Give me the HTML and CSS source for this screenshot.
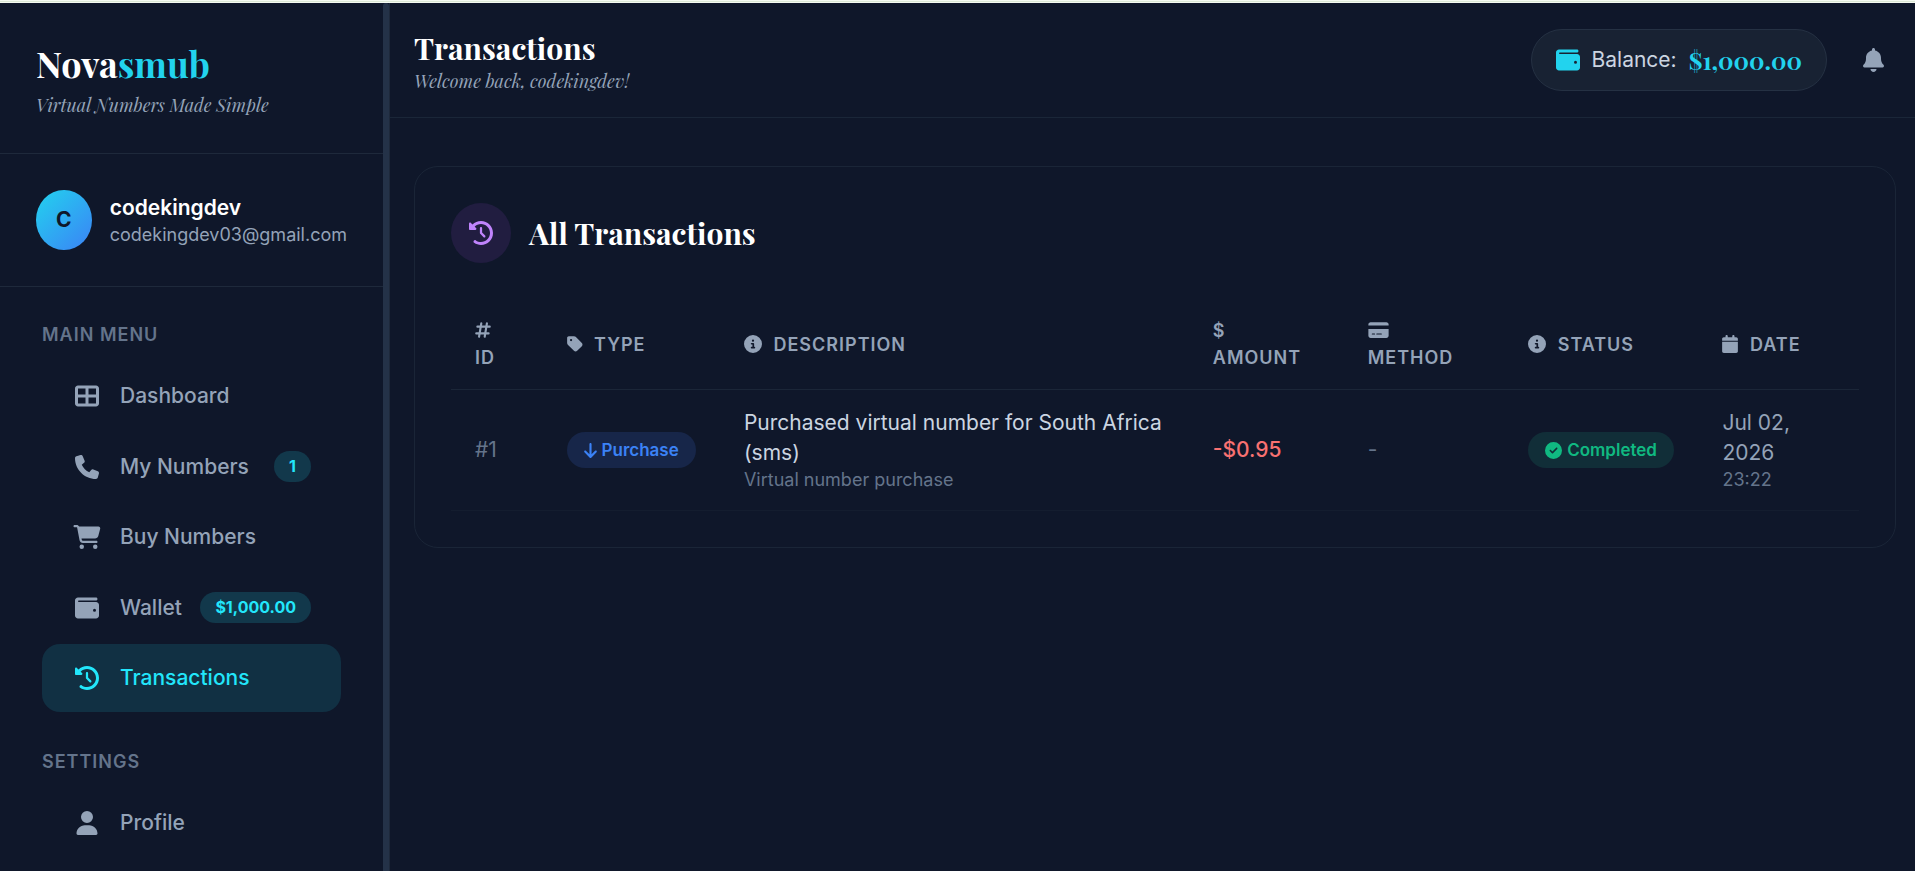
FILE: index.html
```html
<!DOCTYPE html>
<html lang="en">
<head>
    <meta charset="UTF-8">
    <meta name="viewport" content="width=device-width, initial-scale=1.0">
    <title>Transactions - Novasmub</title>
    <link rel="stylesheet" href="styles.css">
</head>
<body>
    <!-- Icons shared by the page -->
    <svg class="icon-defs" aria-hidden="true">
        <symbol id="icon-history" viewBox="0 0 512 512"><path d="M75 75L41 41C25.9 25.9 0 36.6 0 57.9V168c0 13.3 10.7 24 24 24H134.1c21.4 0 32.1-25.9 17-41l-30.8-30.8C155 85.5 203 64 256 64c106 0 192 86 192 192s-86 192-192 192c-40.8 0-78.6-12.7-109.7-34.4c-14.5-10.1-34.4-6.6-44.6 7.9s-6.6 34.4 7.9 44.6C151.2 495 201.7 512 256 512c141.4 0 256-114.6 256-256S397.4 0 256 0C185.3 0 121.3 28.7 75 75zm181 53c-13.3 0-24 10.7-24 24V256c0 6.4 2.5 12.5 7 17l72 72c9.4 9.4 24.6 9.4 33.9 0s9.4-24.6 0-33.9l-65-65V152c0-13.3-10.7-24-24-24z"/></symbol>
        <symbol id="icon-wallet" viewBox="0 0 512 512"><path d="M64 32C28.7 32 0 60.7 0 96V416c0 35.3 28.7 64 64 64H448c35.3 0 64-28.7 64-64V192c0-35.3-28.7-64-64-64H80c-8.8 0-16-7.2-16-16s7.2-16 16-16H448c17.7 0 32-14.3 32-32s-14.3-32-32-32H64zM416 272a32 32 0 1 1 0 64 32 32 0 1 1 0-64z"/></symbol>
        <symbol id="icon-info" viewBox="0 0 512 512"><path d="M256 512A256 256 0 1 0 256 0a256 256 0 1 0 0 512zM216 336h24V272H216c-13.3 0-24-10.7-24-24s10.7-24 24-24h48c13.3 0 24 10.7 24 24v88h8c13.3 0 24 10.7 24 24s-10.7 24-24 24H216c-13.3 0-24-10.7-24-24s10.7-24 24-24zm40-208a32 32 0 1 1 0 64 32 32 0 1 1 0-64z"/></symbol>
    </svg>

    <div class="top-strip"></div>
    <div class="layout">
        <aside class="sidebar">
            <div class="sidebar-inner">
                <div class="brand">
                    <div class="brand-name">Nova<span>smub</span></div>
                    <div class="brand-tagline">Virtual Numbers Made Simple</div>
                </div>

                <div class="user">
                    <div class="avatar">C</div>
                    <div class="user-info">
                        <div class="user-name">codekingdev</div>
                        <div class="user-email">codekingdev03@gmail.com</div>
                    </div>
                </div>

                <nav class="menu">
                    <div class="menu-label">Main Menu</div>
                    <a href="#" class="menu-item">
                        <span class="menu-icon"><svg viewBox="0 0 512 512"><path d="M448 96V224H288V96H448zm0 192V416H288V288H448zM224 224H64V96H224V224zM64 288H224V416H64V288zM64 32C28.7 32 0 60.7 0 96V416c0 35.3 28.7 64 64 64H448c35.3 0 64-28.7 64-64V96c0-35.3-28.7-64-64-64H64z"/></svg></span>
                        <span>Dashboard</span>
                    </a>
                    <a href="#" class="menu-item">
                        <span class="menu-icon"><svg viewBox="0 0 512 512"><path d="M164.9 24.6c-7.7-18.6-28-28.5-47.4-23.2l-88 24C12.1 30.2 0 46 0 64C0 311.4 200.6 512 448 512c18 0 33.8-12.1 38.6-29.5l24-88c5.3-19.4-4.6-39.7-23.2-47.4l-96-40c-16.3-6.8-35.2-2.1-46.3 11.6L304.7 368C234.3 334.7 177.3 277.7 144 207.3L193.3 167c13.7-11.2 18.4-30 11.6-46.3l-40-96z"/></svg></span>
                        <span>My Numbers</span>
                        <span class="badge">1</span>
                    </a>
                    <a href="#" class="menu-item">
                        <span class="menu-icon"><svg viewBox="0 0 576 512"><path d="M0 24C0 10.7 10.7 0 24 0H69.5c22 0 41.5 12.8 50.6 32h411c26.3 0 45.5 25 38.6 50.4l-41 152.3c-8.5 31.4-37 53.3-69.5 53.3H170.7l5.4 28.5c2.2 11.3 12.1 19.5 23.6 19.5H488c13.3 0 24 10.7 24 24s-10.7 24-24 24H199.7c-34.6 0-64.3-24.6-70.7-58.5L77.4 54.5c-.7-3.8-4-6.5-7.9-6.5H24C10.7 48 0 37.3 0 24zM128 464a48 48 0 1 1 96 0 48 48 0 1 1 -96 0zm336-48a48 48 0 1 1 0 96 48 48 0 1 1 0-96z"/></svg></span>
                        <span>Buy Numbers</span>
                    </a>
                    <a href="#" class="menu-item">
                        <span class="menu-icon"><svg><use href="#icon-wallet"/></svg></span>
                        <span>Wallet</span>
                        <span class="badge">$1,000.00</span>
                    </a>
                    <a href="#" class="menu-item active">
                        <span class="menu-icon"><svg><use href="#icon-history"/></svg></span>
                        <span>Transactions</span>
                    </a>
                    <div class="menu-label">Settings</div>
                    <a href="#" class="menu-item">
                        <span class="menu-icon"><svg viewBox="0 0 448 512"><path d="M224 256A128 128 0 1 0 224 0a128 128 0 1 0 0 256zm-45.7 48C79.8 304 0 383.8 0 482.3C0 498.7 13.3 512 29.7 512H418.3c16.4 0 29.7-13.3 29.7-29.7C448 383.8 368.2 304 269.7 304H178.3z"/></svg></span>
                        <span>Profile</span>
                    </a>
                </nav>
            </div>
            <div class="sidebar-thumb"></div>
        </aside>

        <main class="main">
            <header class="header">
                <div>
                    <h1 class="header-title">Transactions</h1>
                    <p class="header-welcome">Welcome back, codekingdev!</p>
                </div>
                <div class="header-right">
                    <div class="balance">
                        <svg class="balance-icon"><use href="#icon-wallet"/></svg>
                        <span>Balance:</span>
                        <span class="balance-amount">$1,000.00</span>
                    </div>
                    <button type="button" class="bell" aria-label="Notifications">
                        <svg viewBox="0 0 448 512"><path d="M224 0c-17.7 0-32 14.3-32 32V51.2C119 66 64 130.6 64 208v18.8c0 47-17.3 92.4-48.5 127.6l-7.4 8.3c-8.4 9.4-10.4 22.9-5.3 34.4S19.4 416 32 416H416c12.6 0 24-7.4 29.2-18.9s3.1-25-5.3-34.4l-7.4-8.3C401.3 319.2 384 273.9 384 226.8V208c0-77.4-55-142-128-156.8V32c0-17.7-14.3-32-32-32zm45.3 493.3c12-12 18.7-28.3 18.7-45.3H224 160c0 17 6.7 33.3 18.7 45.3s28.3 18.7 45.3 18.7s33.3-6.7 45.3-18.7z"/></svg>
                    </button>
                </div>
            </header>

            <div class="content">
                <section class="card">
                    <div class="card-header">
                        <div class="card-icon"><svg><use href="#icon-history"/></svg></div>
                        <h2 class="card-title">All Transactions</h2>
                    </div>
                    <table class="table">
                        <thead>
                            <tr>
                                <th class="col-id"><svg class="th-icon th-icon-narrow th-icon-line" viewBox="0 0 448 512"><path d="M64 160H416M32 352H384M176 64L112 448M336 64L272 448"/></svg> ID</th>
                                <th class="col-type"><svg class="th-icon th-icon-narrow" viewBox="0 0 448 512"><path d="M0 80V229.5c0 17 6.7 33.3 18.7 45.3l176 176c25 25 65.5 25 90.5 0L418.7 317.3c25-25 25-65.5 0-90.5l-176-176c-12-12-28.3-18.7-45.3-18.7H48C21.5 32 0 53.5 0 80zm112 32a32 32 0 1 1 0 64 32 32 0 1 1 0-64z"/></svg> Type</th>
                                <th class="col-description"><svg class="th-icon"><use href="#icon-info"/></svg> Description</th>
                                <th class="col-amount"><span class="th-sign">$</span> Amount</th>
                                <th class="col-method"><svg class="th-icon th-icon-wide" viewBox="0 0 576 512"><path d="M64 32C28.7 32 0 60.7 0 96v32H576V96c0-35.3-28.7-64-64-64H64zM576 224H0V416c0 35.3 28.7 64 64 64H512c35.3 0 64-28.7 64-64V224zM112 352h64c8.8 0 16 7.2 16 16s-7.2 16-16 16H112c-8.8 0-16-7.2-16-16s7.2-16 16-16zm112 16c0-8.8 7.2-16 16-16H368c8.8 0 16 7.2 16 16s-7.2 16-16 16H240c-8.8 0-16-7.2-16-16z"/></svg> Method</th>
                                <th class="col-status"><svg class="th-icon"><use href="#icon-info"/></svg> Status</th>
                                <th class="col-date"><svg class="th-icon th-icon-narrow" viewBox="0 0 448 512"><path d="M96 32V64H48C21.5 64 0 85.5 0 112v48H448V112c0-26.5-21.5-48-48-48H352V32c0-17.7-14.3-32-32-32s-32 14.3-32 32V64H160V32c0-17.7-14.3-32-32-32S96 14.3 96 32zM448 192H0V464c0 26.5 21.5 48 48 48H400c26.5 0 48-21.5 48-48V192z"/></svg> Date</th>
                            </tr>
                        </thead>
                        <tbody>
                            <tr>
                                <td class="muted">#1</td>
                                <td>
                                    <span class="pill pill-purchase">
                                        <svg class="pill-arrow" viewBox="0 0 384 512"><path d="M169.4 470.6c12.5 12.5 32.8 12.5 45.3 0l160-160c12.5-12.5 12.5-32.8 0-45.3s-32.8-12.5-45.3 0L224 370.8 224 64c0-17.7-14.3-32-32-32s-32 14.3-32 32l0 306.7L54.6 265.4c-12.5-12.5-32.8-12.5-45.3 0s-12.5 32.8 0 45.3l160 160z"/></svg>
                                        Purchase
                                    </span>
                                </td>
                                <td>
                                    <div class="description">Purchased virtual number for South Africa (sms)</div>
                                    <div class="small">Virtual number purchase</div>
                                </td>
                                <td class="negative">-$0.95</td>
                                <td class="muted">-</td>
                                <td>
                                    <span class="pill pill-completed">
                                        <svg viewBox="0 0 512 512"><path d="M256 512A256 256 0 1 0 256 0a256 256 0 1 0 0 512zM369 209L241 337c-9.4 9.4-24.6 9.4-33.9 0l-64-64c-9.4-9.4-9.4-24.6 0-33.9s24.6-9.4 33.9 0l47 47L335 175c9.4-9.4 24.6-9.4 33.9 0s9.4 24.6 0 33.9z"/></svg>
                                        Completed
                                    </span>
                                </td>
                                <td>
                                    <div class="date">Jul 02, 2026</div>
                                    <div class="small">23:22</div>
                                </td>
                            </tr>
                        </tbody>
                    </table>
                </section>
            </div>
        </main>
    </div>
</body>
</html>
```
FILE: styles.css
```css
* {
    margin: 0;
    padding: 0;
    box-sizing: border-box;
}

body {
    background-color: #0f172a;
    color: #e2e8f0;
    font-family: Inter, "Liberation Sans", sans-serif;
    font-size: 21px;
    line-height: 30px;
    height: 100vh;
    display: flex;
    flex-direction: column;
    overflow: hidden;
}

svg {
    fill: currentColor;
    display: block;
}

.icon-defs {
    display: none;
}

.top-strip {
    height: 3px;
    flex: none;
    background-color: #dce8d6;
    border-top: 1px solid #f5faf2;
    border-bottom: 1px solid #f5faf2;
}

.layout {
    display: flex;
    flex: 1;
    min-height: 0;
}

/* Sidebar */
.sidebar {
    display: flex;
    flex: none;
    width: 390px;
    border-right: 1px solid #1e293b;
    overflow: hidden;
}

.sidebar-inner {
    flex: 1;
    min-width: 0;
}

.sidebar-thumb {
    width: 6px;
    background-color: #243248;
    border-radius: 3px 3px 0 0;
}

.brand {
    padding: 36px 36px 34px;
    border-bottom: 1px solid #1e293b;
}

.brand-name {
    color: #fff;
    font-family: "Playfair Display", "Liberation Serif", serif;
    font-size: 36px;
    font-weight: 700;
    line-height: 48px;
}

.brand-name span {
    color: #22d3ee;
}

.brand-tagline {
    margin-top: 4px;
    color: #94a3b8;
    font-family: "Playfair Display", "Liberation Serif", serif;
    font-size: 18px;
    font-style: italic;
    line-height: 28px;
}

.user {
    display: flex;
    align-items: center;
    gap: 18px;
    padding: 36px;
    border-bottom: 1px solid #1e293b;
}

.avatar {
    display: flex;
    align-items: center;
    justify-content: center;
    width: 56px;
    height: 60px;
    border-radius: 50%;
    background: linear-gradient(135deg, #22d3ee, #3b82f6);
    color: #0f172a;
    font-weight: 700;
}

.user-info {
    padding-top: 2px;
}

.user-name {
    color: #fff;
    font-weight: 600;
    line-height: 28px;
}

.user-email {
    color: #94a3b8;
    font-size: 18px;
    line-height: 26px;
}

.menu {
    padding: 24px 42px;
}

.menu-label {
    color: #64748b;
    font-size: 18px;
    font-weight: 600;
    letter-spacing: 1px;
    line-height: 27px;
    text-transform: uppercase;
    padding: 10px 0 14px;
}

.menu-item {
    display: flex;
    align-items: center;
    gap: 18px;
    padding: 19px 30px;
    margin-bottom: 2px;
    border-radius: 18px;
    color: #94a3b8;
    font-weight: 500;
    text-decoration: none;
}

.menu-item.active {
    background-color: #113043;
    color: #22e6fb;
}

.menu-item + .menu-label {
    padding-top: 34px;
}

.menu-icon {
    display: flex;
    justify-content: center;
    width: 30px;
}

.menu-icon svg {
    width: 30px;
    height: 24px;
}

.badge {
    margin-left: auto;
    padding: 2px 15px;
    border-radius: 18px;
    background-color: #12384b;
    color: #22e6fb;
    font-size: 16px;
    font-weight: 700;
    line-height: 27px;
}

/* Header */
.main {
    flex: 1;
    min-width: 0;
}

.header {
    display: flex;
    align-items: center;
    justify-content: space-between;
    padding: 24px;
    border-bottom: 1px solid #1a2638;
}

.header-title {
    color: #fff;
    font-family: "Playfair Display", "Liberation Serif", serif;
    font-size: 30px;
    line-height: 42px;
}

.header-welcome {
    color: #94a3b8;
    font-family: "Playfair Display", "Liberation Serif", serif;
    font-size: 18px;
    font-style: italic;
    line-height: 24px;
}

.header-right {
    display: flex;
    align-items: center;
    gap: 29px;
}

.balance {
    display: flex;
    align-items: center;
    gap: 12px;
    padding: 15px 24px;
    border: 1px solid #253143;
    border-radius: 36px;
    background-color: #182233;
    color: #cbd5e1;
}

.balance-icon {
    width: 24px;
    height: 24px;
    color: #22d3ee;
}

.balance-amount {
    color: #22d3ee;
    font-family: "Playfair Display", "Liberation Serif", serif;
    font-size: 24px;
    font-weight: 700;
}

.bell {
    padding: 8px 7px;
    border: none;
    background: none;
    color: #94a3b8;
    cursor: pointer;
}

.bell svg {
    width: 21px;
    height: 24px;
}

/* Transactions card */
.content {
    padding: 48px 19px 48px 24px;
}

.card {
    padding: 36px;
    border: 1px solid #1a2537;
    border-radius: 24px;
}

.card-header {
    display: flex;
    align-items: center;
    gap: 18px;
    margin-bottom: 36px;
}

.card-icon {
    display: flex;
    align-items: center;
    justify-content: center;
    width: 60px;
    height: 60px;
    border-radius: 50%;
    background-color: #211d40;
    color: #c084fc;
}

.card-icon svg {
    width: 24px;
    height: 24px;
}

.card-title {
    color: #fff;
    font-family: "Playfair Display", "Liberation Serif", serif;
    font-size: 30px;
    line-height: 36px;
}

.table {
    width: 100%;
    border-collapse: separate;
    border-spacing: 0;
    table-layout: fixed;
}

.table th {
    padding: 18px 24px;
    border-bottom: 1px solid #1b2638;
    color: #94a3b8;
    font-size: 18px;
    font-weight: 600;
    letter-spacing: 1px;
    line-height: 27px;
    text-align: left;
    text-transform: uppercase;
}

.table td {
    padding: 18px 24px;
    border-bottom: 1px solid #141d2f;
}

.col-id { width: 6.5%; }
.col-type { width: 12.6%; }
.col-description { width: 33.3%; }
.col-amount { width: 11%; }
.col-method { width: 11.4%; }
.col-status { width: 13.8%; }
.col-date { width: 11.4%; }

.th-icon {
    display: inline-block;
    width: 18px;
    height: 18px;
    margin-right: 6px;
    vertical-align: -2px;
}

.th-icon-narrow {
    width: 16px;
}

.th-icon-wide {
    width: 21px;
}

.th-icon-line {
    fill: none;
    stroke: currentColor;
    stroke-width: 60;
    stroke-linecap: round;
}

.th-sign {
    margin-right: 12px;
}

.table .muted {
    color: #64748b;
}

.table .negative {
    color: #f87171;
    font-weight: 500;
}

.description {
    color: #cbd5e1;
}

.date {
    color: #94a3b8;
}

.small {
    color: #64748b;
    font-size: 18px;
    line-height: 24px;
}

.pill {
    display: inline-flex;
    align-items: center;
    gap: 5px;
    padding: 4px 17px;
    border-radius: 18px;
    font-size: 17px;
    font-weight: 600;
    line-height: 28px;
    vertical-align: middle;
}

.pill svg {
    width: 17px;
    height: 17px;
}

.pill .pill-arrow {
    width: 13px;
}

.pill-purchase {
    background-color: #172649;
    color: #3b82f6;
}

.pill-completed {
    background-color: #112e38;
    color: #10b981;
}
```
